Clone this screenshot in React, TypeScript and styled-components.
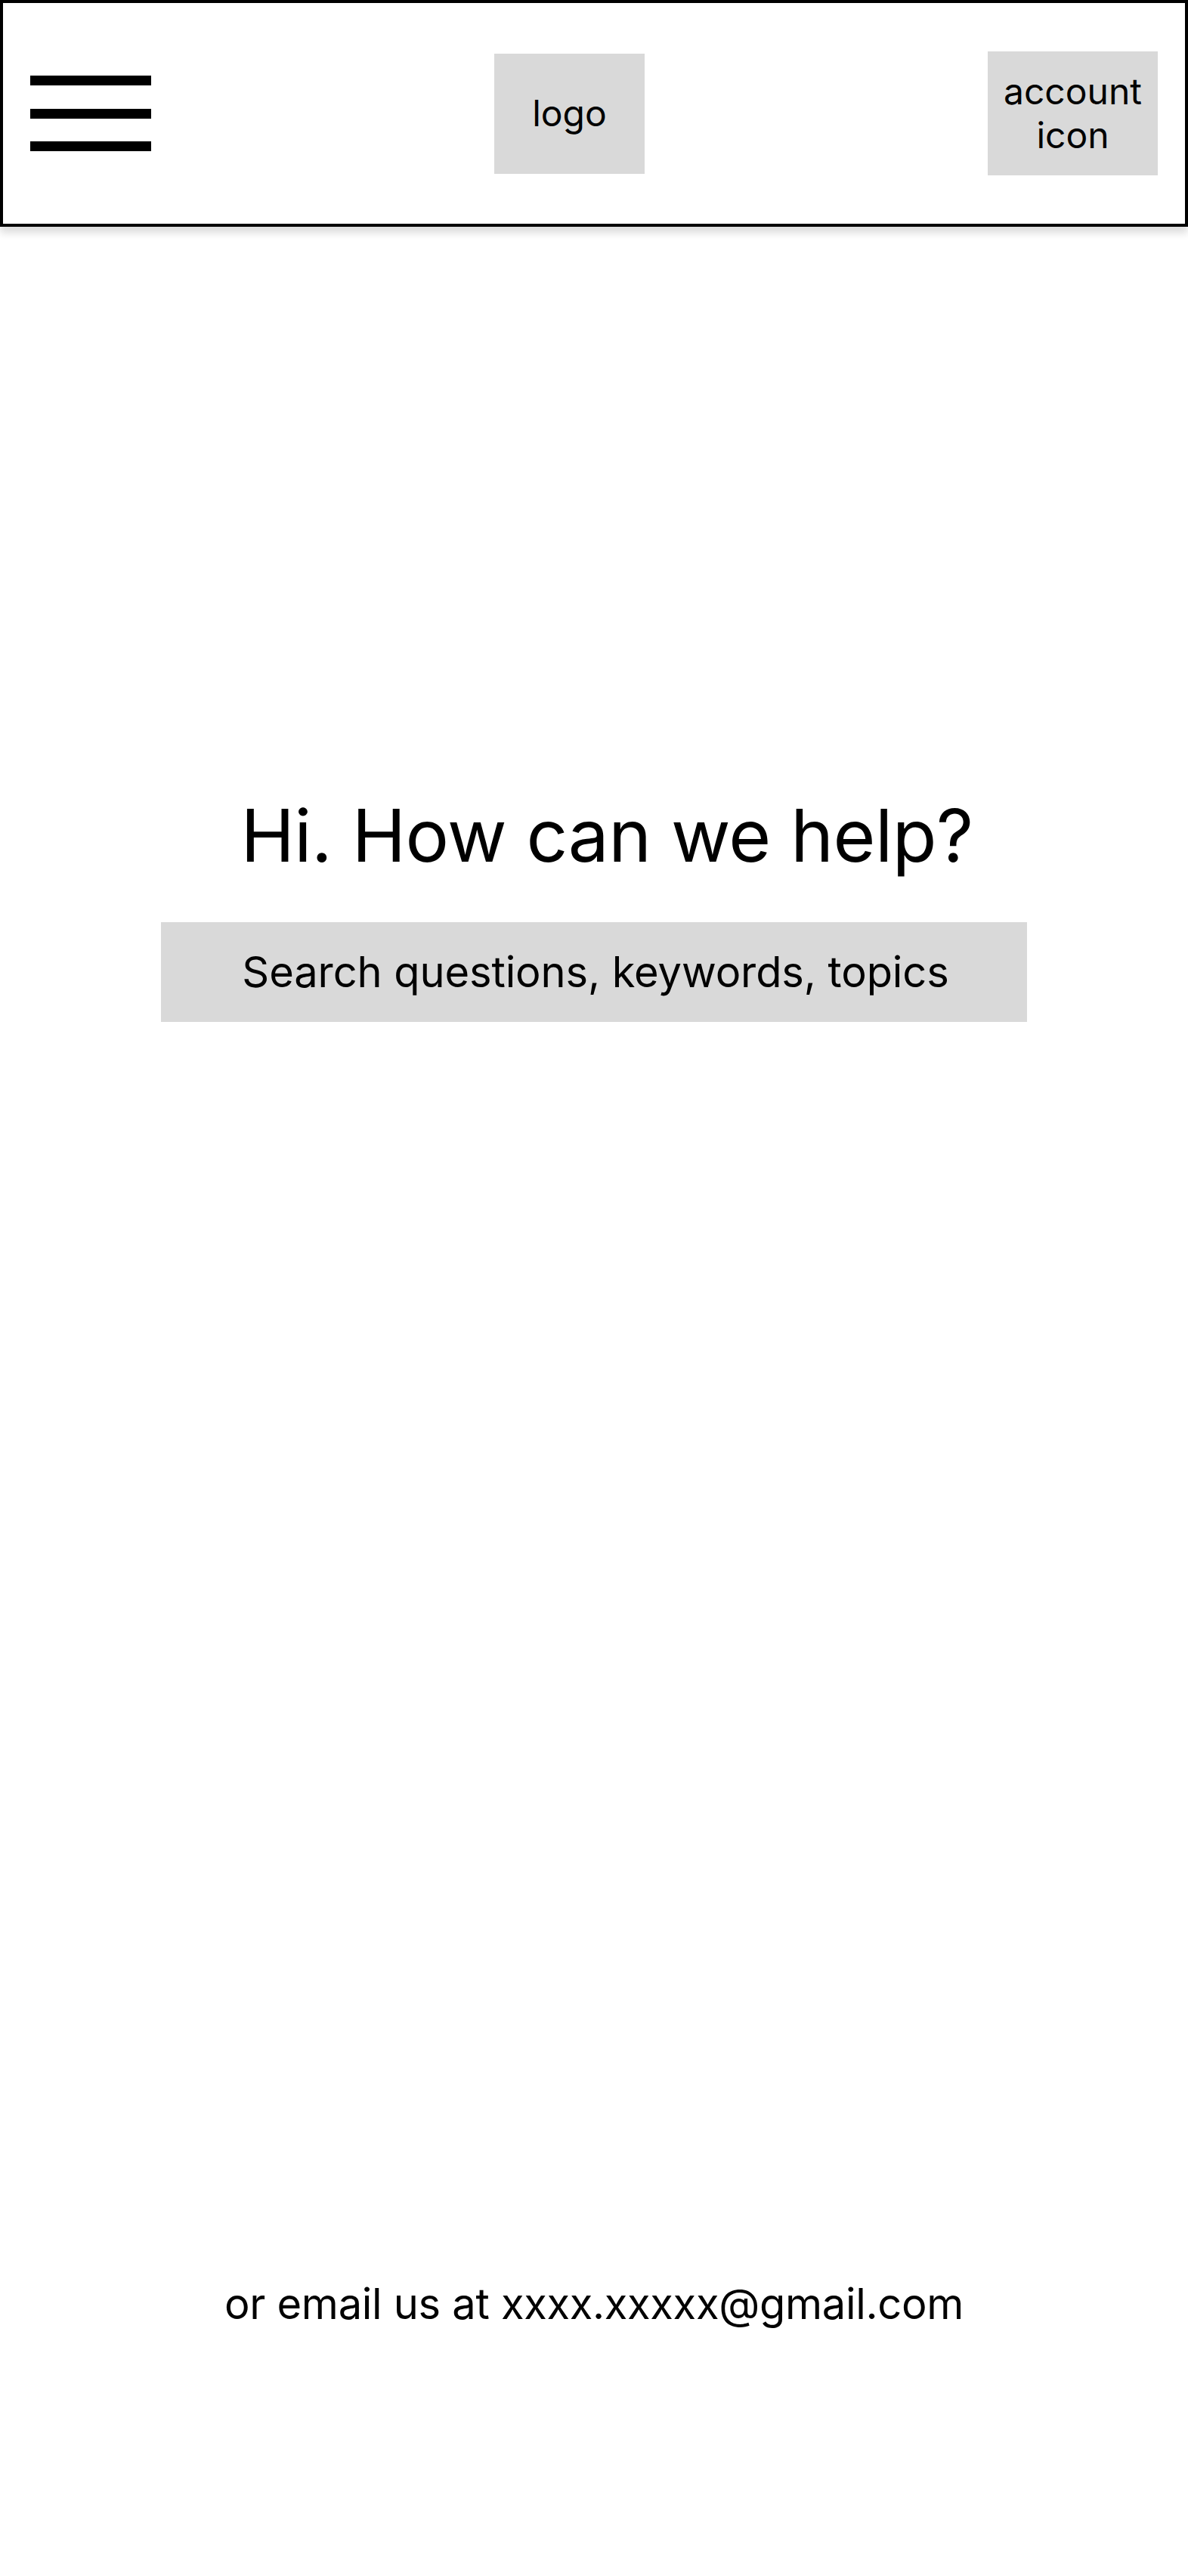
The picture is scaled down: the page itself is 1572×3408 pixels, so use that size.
import React from "react";
import styled, { createGlobalStyle } from "styled-components";

const GlobalStyle = createGlobalStyle`
	* {
		box-sizing: border-box;
	}
	body {
		margin: 0;
		background: #ffffff;
		font-family: Inter, "Noto Sans", sans-serif;
		color: #000000;
	}
`;

const Page = styled.div`
	width: 1572px;
	min-height: 3408px;
	display: flex;
	flex-direction: column;
	background: #ffffff;
`;

const Header = styled.header`
	height: 300px;
	border: 4px solid #000000;
	padding: 0 36px;
	display: flex;
	align-items: center;
	justify-content: space-between;
	background: #ffffff;
	box-shadow: 0 8px 10px rgba(0, 0, 0, 0.14);
`;

const MenuButton = styled.button`
	width: 160px;
	height: 100px;
	padding: 0;
	border: none;
	background: none;
	display: flex;
	flex-direction: column;
	justify-content: space-between;
	cursor: pointer;
`;

const MenuBar = styled.span`
	display: block;
	width: 100%;
	height: 13px;
	background: #000000;
`;

const Placeholder = styled.div<{ $w: number; $h: number }>`
	width: ${(p) => p.$w}px;
	height: ${(p) => p.$h}px;
	background: #d9d9d9;
	display: flex;
	align-items: center;
	justify-content: center;
	text-align: center;
	font-size: 48px;
	line-height: 58px;
`;

const Hero = styled.section`
	padding-top: 747px;
	display: flex;
	flex-direction: column;
	align-items: center;
`;

const Title = styled.h1`
	margin: 0;
	padding-left: 34px;
	font-size: 96px;
	font-weight: 400;
	line-height: 116px;
	letter-spacing: -0.5px;
`;

const SearchBox = styled.div`
	margin-top: 57px;
	width: 1146px;
	height: 132px;
	padding-left: 4px;
	background: #d9d9d9;
	display: flex;
	align-items: center;
	justify-content: center;
	font-size: 56px;
	letter-spacing: -0.1px;
`;

const Contact = styled.p`
	margin: 1662px 0 0;
	text-align: center;
	font-size: 56px;
	line-height: 68px;
	letter-spacing: -0.3px;
`;

const App: React.FC = () => {
	return (
		<Page>
			<GlobalStyle />
			<Header>
				<MenuButton aria-label="menu">
					<MenuBar />
					<MenuBar />
					<MenuBar />
				</MenuButton>
				<Placeholder $w={199} $h={159}>logo</Placeholder>
				<Placeholder $w={225} $h={164}>
					account
					<br />
					icon
				</Placeholder>
			</Header>
			<Hero>
				<Title>Hi. How can we help?</Title>
				<SearchBox>Search questions, keywords, topics</SearchBox>
			</Hero>
			<Contact>or email us at xxxx.xxxxx@gmail.com</Contact>
		</Page>
	);
};

export default App;
